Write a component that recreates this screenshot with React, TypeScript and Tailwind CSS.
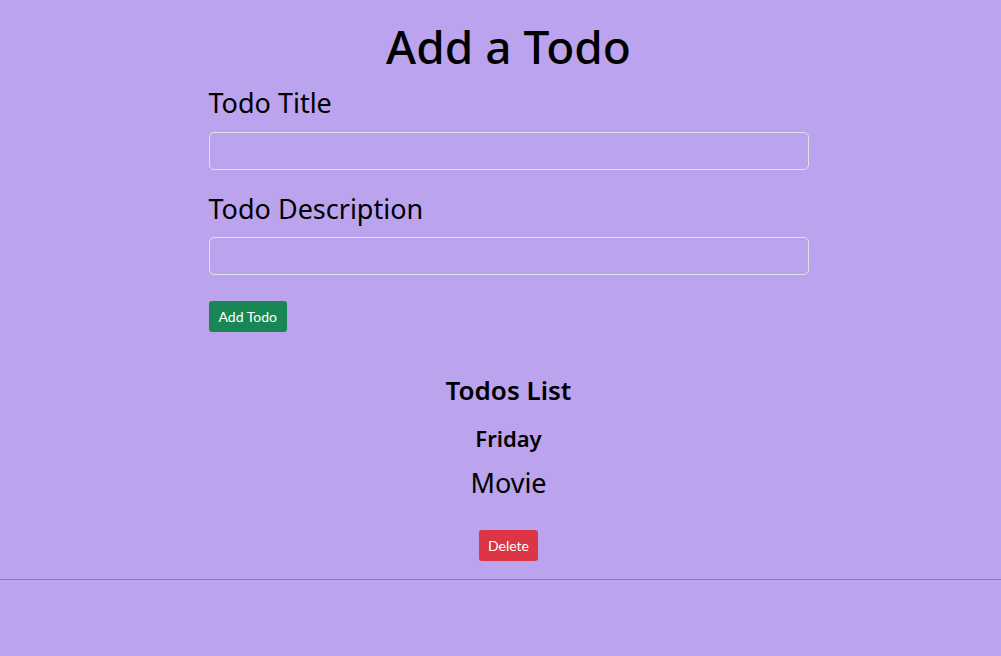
export default function App() {
  const font = { fontFamily: '"Noto Sans", "Open Sans", sans-serif' };
  return (
    <div className="min-h-[656px] w-full bg-[#bba3ed] text-black" style={font}>
      <div className="pt-[12px]">
        <div className="pl-[16px]">
          <h1 className="text-center text-[46px] leading-[68px] font-medium">Add a Todo</h1>
          <div className="mx-auto w-[600px]">
            <div className="text-[27px] leading-[36px] mt-[5px]">Todo Title</div>
            <div className="mt-[11px] h-[38px] rounded-[5px] border border-[#dee2e6]"></div>
            <div className="text-[27px] leading-[36px] mt-[21px]">Todo Description</div>
            <div className="mt-[10px] h-[38px] rounded-[5px] border border-[#dee2e6]"></div>
            <button className="mt-[26px] h-[31px] px-[10px] rounded-[3px] bg-[#198754] text-white text-[14px]" style={{ fontFamily: 'Lato, sans-serif' }}>Add Todo</button>
          </div>
          <div className="mt-[40px] flex flex-col items-center">
            <div className="text-[26px] leading-[36px] font-semibold">Todos List</div>
            <div className="mt-[15px] text-[22px] leading-[30px] font-semibold">Friday</div>
            <div className="mt-[12px] text-[27px] leading-[36px]">Movie</div>
            <button className="mt-[29px] h-[31px] px-[9px] rounded-[3px] bg-[#dc3545] text-white text-[14px]" style={{ fontFamily: 'Lato, sans-serif' }}>Delete</button>
          </div>
        </div>
        <div className="mt-[18px] h-px bg-[#8c7bb2]"></div>
      </div>
    </div>
  );
}
